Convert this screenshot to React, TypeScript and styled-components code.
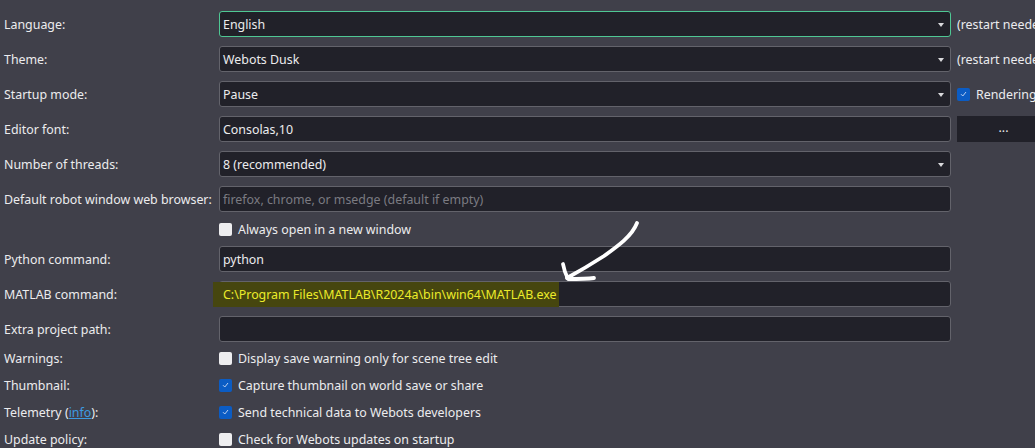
import React from "react";
import styled, { createGlobalStyle } from "styled-components";

const colors = {
  background: "#40404a",
  field: "#212129",
  border: "#63636b",
  focus: "#4fc794",
  text: "#ececee",
  placeholder: "#7b7b82",
  check: "#0b5cc4",
  link: "#3d9be0",
  highlight: "#46460f",
  highlightText: "#ecec2a",
};

const GlobalStyle = createGlobalStyle`
  html, body {
    margin: 0;
    padding: 0;
    background: ${colors.background};
    overflow: hidden;
  }
  body {
    font-family: "Noto Sans", "Open Sans", sans-serif;
    font-size: 12.4px;
    color: ${colors.text};
  }
`;

const Page = styled.div`
  position: relative;
  width: 1035px;
  height: 448px;
  padding: 11px 0 0 4px;
  box-sizing: border-box;
  overflow: hidden;
`;

const FieldGrid = styled.div`
  display: grid;
  grid-template-columns: 211px 732px 120px;
  grid-template-rows: repeat(6, 26px) 16px repeat(3, 26px);
  column-gap: 4px;
  row-gap: 9px;
  align-items: center;
`;

const OptionGrid = styled(FieldGrid)`
  grid-template-rows: repeat(4, 18px);
  margin-top: 7px;
`;

const Label = styled.div`
  white-space: nowrap;
  line-height: 16px;
  padding-top: 1px;
`;

const Field = styled.div<{ $focused?: boolean }>`
  position: relative;
  height: 26px;
  box-sizing: border-box;
  display: flex;
  align-items: center;
  padding: 0 26px 0 3px;
  background: ${colors.field};
  border: 1px solid ${({ $focused }) => ($focused ? colors.focus : colors.border)};
  border-radius: 3px;
  white-space: nowrap;
`;

const Placeholder = styled.span`
  color: ${colors.placeholder};
`;

const DropArrow = styled.span`
  position: absolute;
  right: 6px;
  top: 11px;
  width: 0;
  height: 0;
  border-left: 3.5px solid transparent;
  border-right: 3.5px solid transparent;
  border-top: 4px solid #d9d9dc;
`;

const Side = styled.div`
  margin-left: 2px;
  white-space: nowrap;
  display: flex;
  align-items: center;
`;

const SideButton = styled.div`
  margin-left: 2px;
  width: 93px;
  height: 26px;
  background: ${colors.field};
  display: flex;
  align-items: center;
  justify-content: center;
  padding-bottom: 3px;
  box-sizing: border-box;
`;

const CheckRow = styled.label`
  display: flex;
  align-items: center;
  gap: 6px;
  white-space: nowrap;
`;

const Box = styled.span<{ $checked?: boolean }>`
  width: 13px;
  height: 13px;
  flex: none;
  box-sizing: border-box;
  border-radius: 2px;
  display: flex;
  align-items: center;
  justify-content: center;
  background: ${({ $checked }) => ($checked ? colors.check : "#eeeef0")};
`;

const Highlight = styled.span`
  margin-left: -10px;
  padding: 4px 3px 4px 10px;
  background: ${colors.highlight};
  color: ${colors.highlightText};
`;

const Link = styled.span`
  color: ${colors.link};
  text-decoration: underline;
`;

const Annotation = styled.svg`
  position: absolute;
  left: 0;
  top: 0;
  pointer-events: none;
`;

const Checkbox = ({ checked, children }: { checked?: boolean; children: React.ReactNode }) => (
  <CheckRow>
    <Box $checked={checked}>
      {checked && (
        <svg width="7" height="6" viewBox="0 0 7 6">
          <path d="M1 3.2 L2.8 5 L6 1" fill="none" stroke="#b9cff0" strokeWidth="1" />
        </svg>
      )}
    </Box>
    {children}
  </CheckRow>
);

const Select = ({ value, focused }: { value: string; focused?: boolean }) => (
  <Field $focused={focused}>
    {value}
    <DropArrow />
  </Field>
);

export default function App() {
  return (
    <>
      <GlobalStyle />
      <Page>
        <FieldGrid>
          <Label>Language:</Label>
          <Select value="English" focused />
          <Side>(restart needed)</Side>

          <Label>Theme:</Label>
          <Select value="Webots Dusk" />
          <Side>(restart needed)</Side>

          <Label>Startup mode:</Label>
          <Select value="Pause" />
          <Side>
            <Checkbox checked>Rendering</Checkbox>
          </Side>

          <Label>Editor font:</Label>
          <Field>Consolas,10</Field>
          <SideButton>...</SideButton>

          <Label>Number of threads:</Label>
          <Select value="8 (recommended)" />
          <span />

          <Label>Default robot window web browser:</Label>
          <Field>
            <Placeholder>firefox, chrome, or msedge (default if empty)</Placeholder>
          </Field>
          <span />

          <span />
          <Checkbox>Always open in a new window</Checkbox>
          <span />

          <Label>Python command:</Label>
          <Field>python</Field>
          <span />

          <Label>MATLAB command:</Label>
          <Field>
            <Highlight>C:\Program Files\MATLAB\R2024a\bin\win64\MATLAB.exe</Highlight>
          </Field>
          <span />

          <Label>Extra project path:</Label>
          <Field />
          <span />
        </FieldGrid>

        <OptionGrid>
          <Label>Warnings:</Label>
          <Checkbox>Display save warning only for scene tree edit</Checkbox>
          <span />

          <Label>Thumbnail:</Label>
          <Checkbox checked>Capture thumbnail on world save or share</Checkbox>
          <span />

          <Label>
            Telemetry (<Link>info</Link>):
          </Label>
          <Checkbox checked>Send technical data to Webots developers</Checkbox>
          <span />

          <Label>Update policy:</Label>
          <Checkbox>Check for Webots updates on startup</Checkbox>
          <span />
        </OptionGrid>

        <Annotation width="1035" height="448">
          <g fill="none" stroke="#ffffff" strokeWidth="3.8" strokeLinecap="round" strokeLinejoin="round">
            <path d="M637 223 C632 236 618 246 604 256 C590 265 578 272 567 278" />
            <path d="M563 264 C564 270 566 275 568 279 C577 279 586 279 594 278" />
          </g>
        </Annotation>
      </Page>
    </>
  );
}
